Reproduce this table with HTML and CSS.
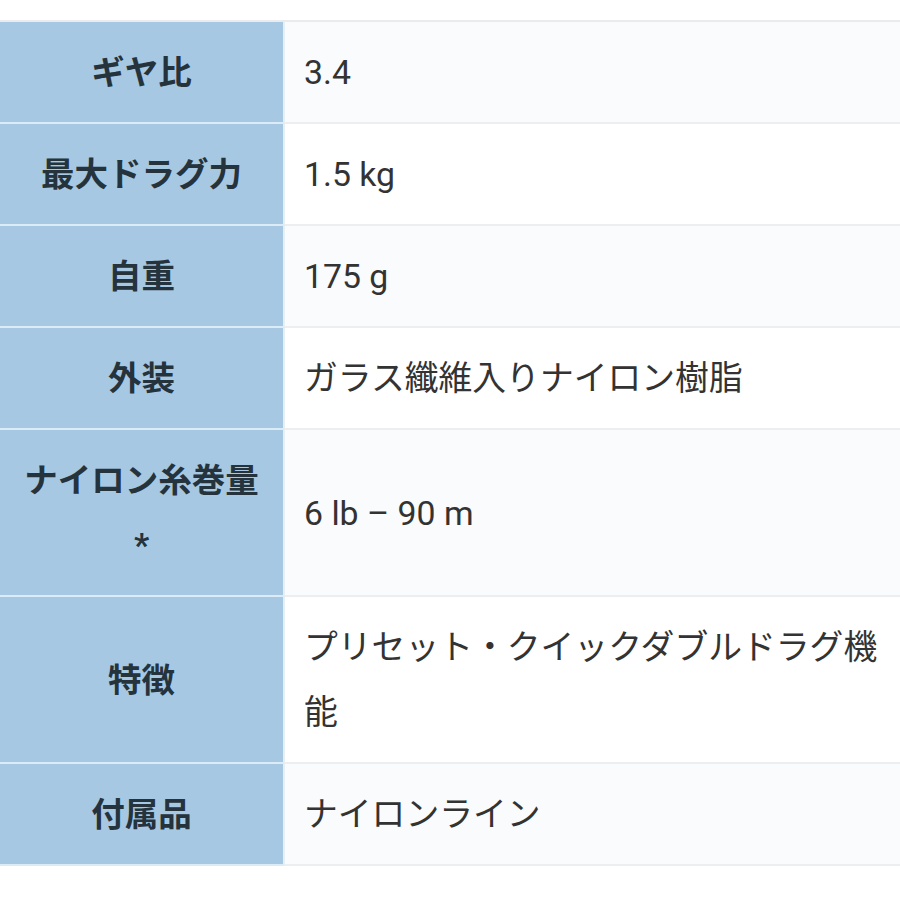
FILE: index.html
```html
<!DOCTYPE html>
<html lang="ja">
<head>
<meta charset="utf-8">
<link rel="stylesheet" href="styles.css">
</head>
<body>
<table class="spec">
  <tr class="odd"><th>ギヤ比</th><td>3.4</td></tr>
  <tr><th>最大ドラグ力</th><td>1.5 kg</td></tr>
  <tr class="odd"><th>自重</th><td>175 g</td></tr>
  <tr><th>外装</th><td>ガラス纖維入りナイロン樹脂</td></tr>
  <tr class="odd"><th>ナイロン糸巻量*</th><td>6 lb – 90 m</td></tr>
  <tr><th>特徴</th><td>プリセット・クイックダブルドラグ機能</td></tr>
  <tr class="odd"><th>付属品</th><td>ナイロンライン</td></tr>
</table>
</body>
</html>
```
FILE: styles.css
```css
html, body {
  margin: 0;
  padding: 0;
  background: #ffffff;
}
body {
  padding-top: 20px;
  font-family: Roboto, "Noto Sans CJK JP", sans-serif;
}
.spec {
  width: 900px;
  border-collapse: separate;
  border-spacing: 0;
  border-top: 2px solid #e9ebec;
  table-layout: fixed;
}
.spec th {
  width: 243px;
  padding: 18px 20px 17px 20px;
  background: #a7c8e2;
  color: #25333d;
  font-weight: 700;
  font-size: 33.5px;
  line-height: 65px;
  text-align: center;
  vertical-align: middle;
  border-bottom: 2px solid #dcecf6;
  border-right: 2px solid #e6eff4;
}
.spec td {
  padding: 18px 17px 17px 19px;
  background: #ffffff;
  color: #333333;
  font-weight: 400;
  font-size: 33.8px;
  line-height: 65px;
  text-align: left;
  vertical-align: middle;
  border-bottom: 2px solid #eceeef;
}
.spec tr.odd td {
  background: #f9fbfc;
}
```
